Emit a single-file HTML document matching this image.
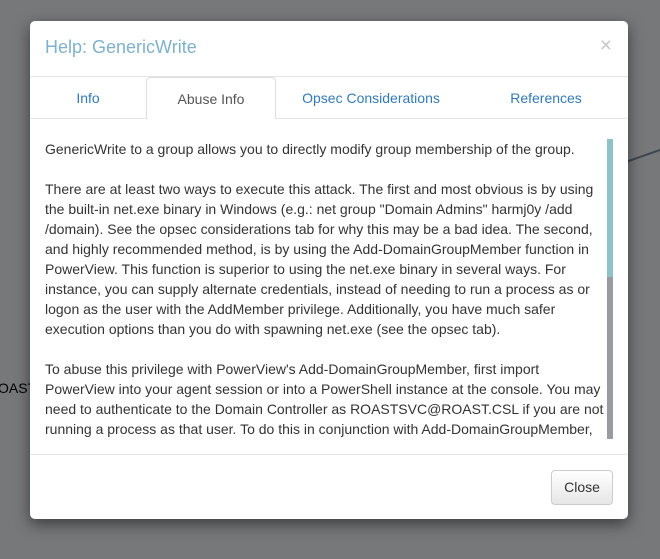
<!DOCTYPE html>
<html><head><style>
body{margin:0;width:660px;height:559px;background:#77787a;font-family:"Liberation Sans",sans-serif;position:relative;overflow:hidden}
.m{position:absolute;left:30px;top:21px;width:598px;height:498px;background:#fff;border-radius:5px;box-shadow:0 5px 15px rgba(0,0,0,.5)}
.h{position:absolute;left:15px;top:16px;font-size:18px;color:#7fb2c9}
.x{position:absolute;right:16px;top:13px;font-size:21px;color:#c8c8c8}
.l{position:absolute;left:0;right:0;height:1px;background:#e5e5e5}
.t{position:absolute;top:56px;height:41px;line-height:43px;font-size:14px;color:#337ab7;text-align:center}
.txt{position:absolute;left:15px;top:118px;width:560px;height:299px;overflow:hidden;font-size:14px;line-height:20px;color:#333}
.txt p{margin:0 0 20px}
</style></head><body>
<svg style="position:absolute;left:0;top:0" width="660" height="559"><line x1="620" y1="164" x2="660" y2="150" stroke="#3b4650" stroke-width="2"/></svg>
<div style="position:absolute;left:-2px;top:380px;font-size:14px;color:#000">OAST</div>
<div class="m">
<div class="h">Help: GenericWrite</div><div class="x">×</div>
<div class="l" style="top:55px"></div>
<div class="l" style="top:97px"></div>
<div class="t" style="left:0;width:116px">Info</div>
<div class="t" style="left:116px;width:130px;top:56px;height:42px;background:#fff;border:1px solid #ddd;border-bottom:none;border-radius:4px 4px 0 0;color:#555;box-sizing:border-box;line-height:42px">Abuse Info</div>
<div class="t" style="left:246px;width:190px">Opsec Considerations</div>
<div class="t" style="left:436px;width:160px">References</div>
<div class="txt">
<p>GenericWrite to a group allows you to directly modify group membership of the group.</p>
<p>There are at least two ways to execute this attack. The first and most obvious is by using the built-in net.exe binary in Windows (e.g.: net group "Domain Admins" harmj0y /add /domain). See the opsec considerations tab for why this may be a bad idea. The second, and highly recommended method, is by using the Add-DomainGroupMember function in PowerView. This function is superior to using the net.exe binary in several ways. For instance, you can supply alternate credentials, instead of needing to run a process as or logon as the user with the AddMember privilege. Additionally, you have much safer execution options than you do with spawning net.exe (see the opsec tab).</p>
<p>To abuse this privilege with PowerView's Add-DomainGroupMember, first import PowerView into your agent session or into a PowerShell instance at the console. You may need to authenticate to the Domain Controller as ROASTSVC@ROAST.CSL if you are not running a process as that user. To do this in conjunction with Add-DomainGroupMember, first create a PSCredential object.</p>
</div>
<div style="position:absolute;left:577px;top:118px;width:6px;height:300px;background:#9a9ba0"></div>
<div style="position:absolute;left:577px;top:118px;width:6px;height:138px;background:#8fc2c8"></div>
<div class="l" style="top:433px"></div>
<div style="position:absolute;left:521px;top:449px;width:60px;height:33px;border:1px solid #ccc;border-radius:4px;background:linear-gradient(#fff,#e6e6e6);font-size:14px;color:#333;text-align:center;line-height:33px">Close</div>
</div>
</body></html>
